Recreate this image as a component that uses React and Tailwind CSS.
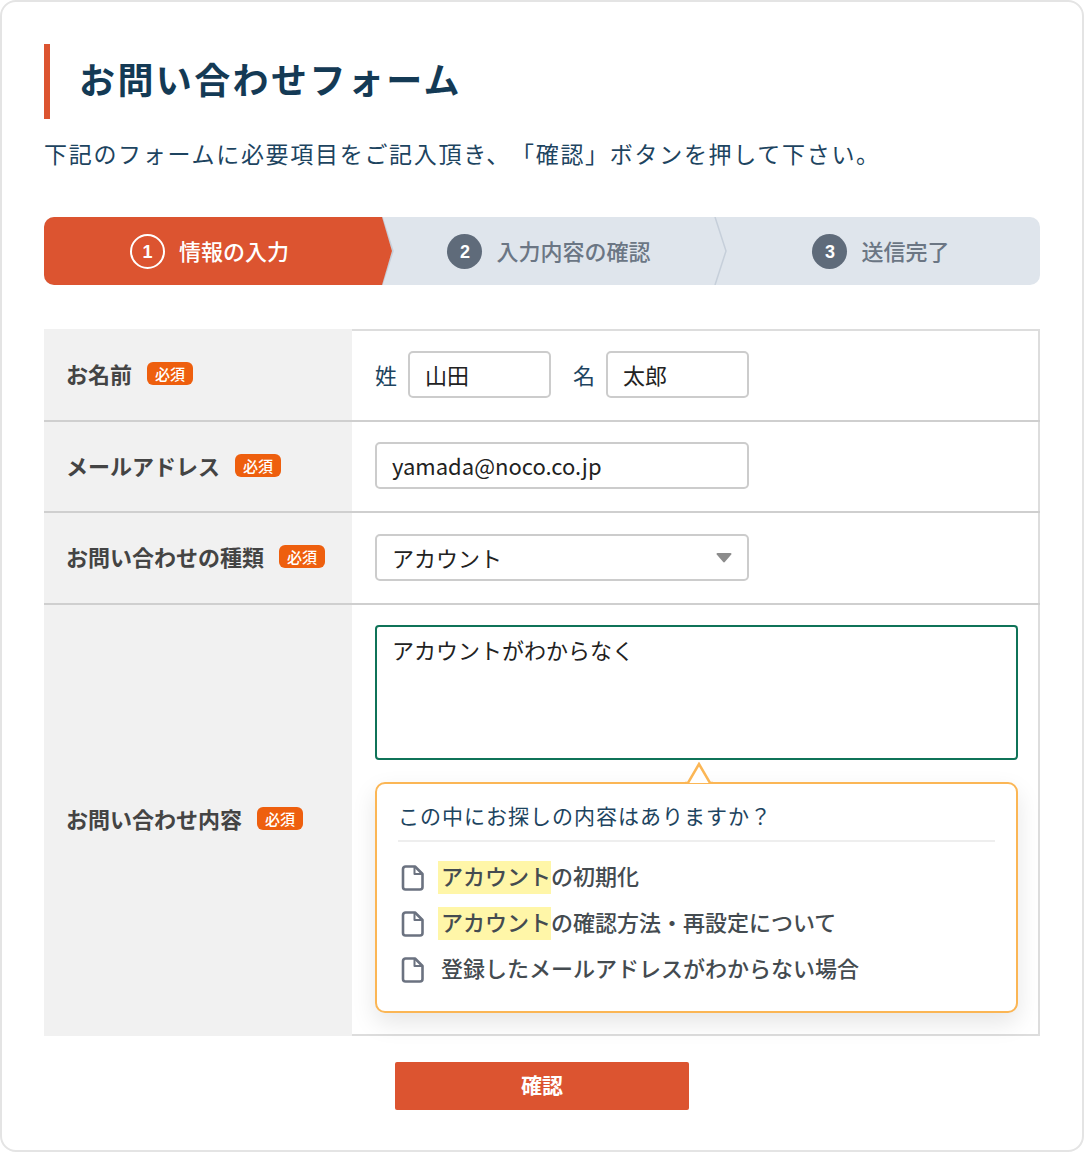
import React from 'react';

const inputClass = "h-[47px] border-2 border-[#cccccc] rounded-[5px] bg-white px-[15px] text-[22px] text-[#222222] outline-none";

function Badge() {
  return (
    <span className="ml-[15px] inline-flex h-[23px] w-[46px] shrink-0 items-center justify-center rounded-[6px] bg-[#ee5f0e] text-[15px] font-medium leading-none text-white">
      必須
    </span>
  );
}

function Row({ label, children, rightClass = "", last = false }) {
  return (
    <div className={last ? "flex" : "flex border-b-2 border-[#cfcfcf]"}>
      <div className={`flex w-[308px] shrink-0 items-center bg-[#f1f1f1] pl-[22px] text-[22px] font-bold text-[#444444] ${last ? "pb-[5px]" : "pb-[3px]"}`}>
        {label}
        <Badge />
      </div>
      <div className={`flex-1 border-r-2 border-[#dddddd] pl-[23px] pr-[19px] ${rightClass}`}>
        {children}
      </div>
    </div>
  );
}

function Step({ num, children, active = false, className = "" }) {
  return (
    <div className={`flex h-full items-center justify-center gap-[14px] ${className}`}>
      <span
        className={
          active
            ? "flex h-[35px] w-[35px] items-center justify-center rounded-full border-2 border-white pt-[2px] text-[18px] font-bold text-white font-['Liberation_Sans',sans-serif]"
            : "flex h-[35px] w-[35px] items-center justify-center rounded-full bg-[#5f6b7a] pt-[2px] text-[18px] font-bold text-white font-['Liberation_Sans',sans-serif]"
        }
      >
        {num}
      </span>
      <span className={active ? "pb-[2px] text-[22px] font-medium text-white" : "pb-[2px] text-[22px] font-medium text-[#6b7684]"}>
        {children}
      </span>
    </div>
  );
}

function DocIcon() {
  return (
    <svg width="24" height="26" viewBox="0 0 24 26" fill="none" className="ml-[3px] shrink-0">
      <path
        d="M4.500 1.500h9.500l7.500 7.500v13a2.500 2.500 0 0 1-2.500 2.500H4.500A2.500 2.500 0 0 1 2 22V4A2.500 2.500 0 0 1 4.500 1.500Z"
        fill="#ffffff"
        stroke="#6b7280"
        strokeWidth="2.600"
        strokeLinejoin="round"
      />
      <path d="M13.500 1.500V9h8" stroke="#6b7280" strokeWidth="2" strokeLinejoin="round" />
    </svg>
  );
}

function Suggestion({ mark, children }) {
  return (
    <li className="flex h-[46px] items-center text-[22px] font-medium text-[#444b50]">
      <DocIcon />
      <span className="-mt-[2px] ml-[16px] h-[33px] leading-[29px]">
        {mark && <mark className="-ml-[3px] inline-block h-[33px] bg-[#fff6a8] pl-[3px] align-top leading-[29px] text-[#444b50]">{mark}</mark>}
        {children}
      </span>
    </li>
  );
}

export default function App() {
  return (
    <div className="h-[1152px] w-[1084px] rounded-[16px] border-2 border-[#e4e4e4] bg-white pl-[42px] pr-[42px] pt-[42px] font-['Noto_Sans_CJK_JP','Noto_Sans',sans-serif]">
      <h1 className="flex h-[75px] items-center border-l-[6px] border-[#dc5430] pb-[8px] pl-[29px] text-[36px] font-bold tracking-[2.400px] text-[#143a55]">
        お問い合わせフォーム
      </h1>
      <p className="mt-[16px] text-[23px] leading-[36px] tracking-[1.700px] text-[#1d4460] [text-spacing-trim:space-all]">
        下記のフォームに必要項目をご記入頂き、「確認」ボタンを押して下さい。
      </p>

      <div className="relative mt-[46px] flex h-[68px] overflow-hidden rounded-[10px] bg-[#dfe5ec]">
        <Step num="1" active className="relative z-10 w-[348px] bg-[#dc5430] pr-[17px] [clip-path:polygon(0_0,338px_0,348px_50%,338px_100%,0_100%)]">情報の入力</Step>
        <Step num="2" className="w-[335px] pr-[21px]">入力内容の確認</Step>
        <Step num="3" className="flex-1 pr-[5px]">送信完了</Step>
        <svg width="14" height="68" viewBox="0 0 14 68" fill="none" className="absolute left-[337px] top-0">
          <path d="M1 0l11 34L1 68" stroke="#c6cfda" strokeWidth="1.500" />
        </svg>
        <svg width="14" height="68" viewBox="0 0 14 68" fill="none" className="absolute left-[670px] top-0">
          <path d="M1 0l11 34L1 68" stroke="#c6cfda" strokeWidth="1.500" />
        </svg>
      </div>

      <div className="mt-[44px]">
        <Row label="お名前" rightClass="flex items-center border-t-2 border-t-[#dddddd] h-[91px] pb-[3px]">
          <span className="text-[22px] text-[#1d4460]">姓</span>
          <input className={`${inputClass} ml-[11px] w-[143px]`} defaultValue="山田" />
          <span className="ml-[22px] text-[22px] text-[#1d4460]">名</span>
          <input className={`${inputClass} ml-[11px] w-[143px]`} defaultValue="太郎" />
        </Row>
        <Row label="メールアドレス" rightClass="flex items-center h-[89px] pb-[3px]">
          <input className={`${inputClass} w-[374px]`} defaultValue="yamada@noco.co.jp" />
        </Row>
        <Row label="お問い合わせの種類" rightClass="flex items-center h-[90px] pb-[1px]">
          <div className="relative w-[374px]">
            <select className={`${inputClass} w-full appearance-none`} defaultValue="account">
              <option value="account">アカウント</option>
            </select>
            <svg width="16" height="11" viewBox="0 0 16 11" className="pointer-events-none absolute right-[17px] top-[18px]">
              <path d="M1.500 1h13a1 1 0 0 1 .8 1.600L9 9.800a1.300 1.300 0 0 1-2 0L.7 2.600A1 1 0 0 1 1.500 1Z" fill="#8c8c8c" />
            </svg>
          </div>
        </Row>
        <Row label="お問い合わせ内容" last rightClass="border-b-2 border-b-[#dddddd] pt-[20px] h-[431px]">
          <textarea
            className="block h-[135px] w-[643px] resize-none rounded-[4px] border-2 border-[#0f7358] bg-white px-[15px] py-[4px] text-[22px] leading-[36px] text-[#222222] outline-none"
            defaultValue="アカウントがわからなく"
          />
          <div className="relative mt-[22px] h-[231px] w-[643px] rounded-[10px] border-2 border-[#fbb655] bg-white px-[21px] pt-[13px] shadow-[0_10px_24px_rgba(0,0,0,0.10)]">
            <svg width="28" height="22" viewBox="0 0 28 22" fill="none" className="absolute left-[308px] top-[-22px]">
              <path d="M0 20.900h3L14 2l11 18.900h3" fill="#ffffff" stroke="#fbb655" strokeWidth="2.500" />
            </svg>
            <p className="border-b-2 border-[#eeeeee] pb-[7px] text-[21px] leading-[36px] tracking-[1px] text-[#1d4460]">
              この中にお探しの内容はありますか？
            </p>
            <ul className="mt-[13px]">
              <Suggestion mark="アカウント">の初期化</Suggestion>
              <Suggestion mark="アカウント">の確認方法・再設定について</Suggestion>
              <Suggestion>登録したメールアドレスがわからない場合</Suggestion>
            </ul>
          </div>
        </Row>
      </div>

      <button className="mx-auto mt-[26px] block h-[48px] w-[294px] rounded-[2px] bg-[#dc5430] pb-[3px] text-[21px] font-bold text-white">
        確認
      </button>
    </div>
  );
}
